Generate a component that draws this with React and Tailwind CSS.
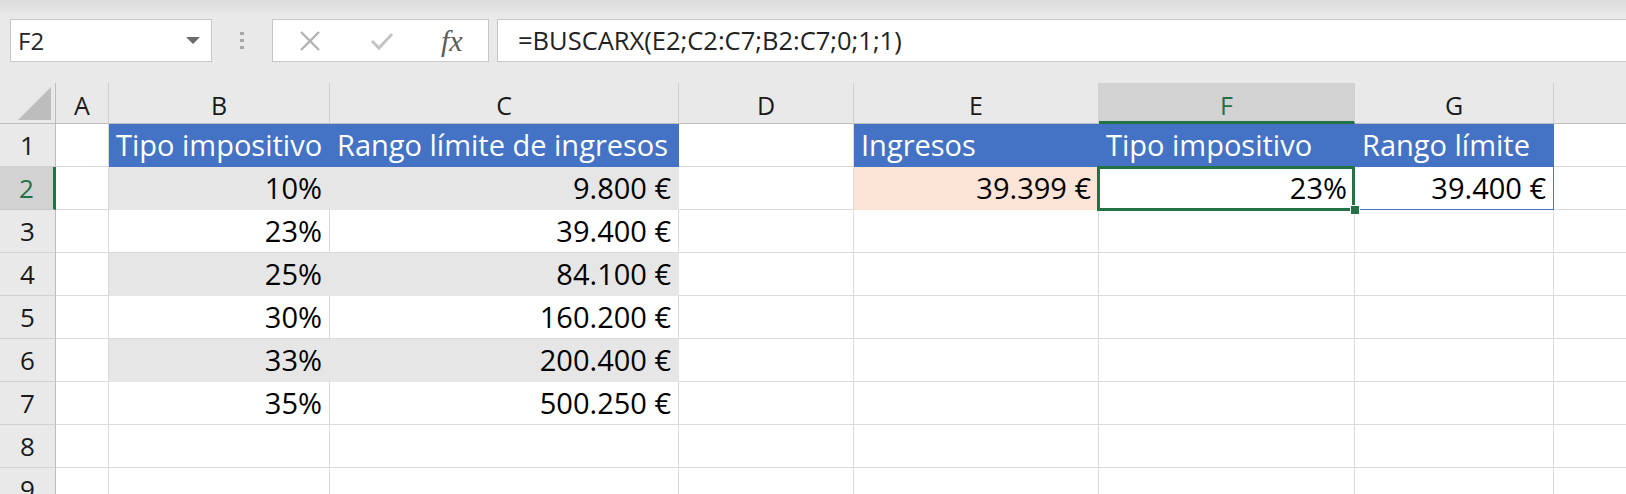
import React from 'react';

const cols = ['A', 'B', 'C', 'D', 'E', 'F', 'G', ''];

const BLUE = 'bg-[#4472c4] border-[#4472c4] text-white';
const GREY = 'bg-[#e7e6e6] border-[#e7e6e6] text-black';

// one object per sheet row, keys are the column letters
const rows = [
    { b: 'Tipo impositivo', c: 'Rango límite de ingresos', e: 'Ingresos', f: 'Tipo impositivo', g: 'Rango límite', head: true },
    { b: '10%', c: '9.800 €', e: '39.399 €', f: '23%', g: '39.400 €', grey: true },
    { b: '23%', c: '39.400 €' },
    { b: '25%', c: '84.100 €', grey: true },
    { b: '30%', c: '160.200 €' },
    { b: '33%', c: '200.400 €', grey: true },
    { b: '35%', c: '500.250 €' },
    {},
    {},
];

function Cell({ children, className = '', right }) {
    return (
        <div
            className={`relative h-[43px] border-r border-b text-[29px] leading-[42px] whitespace-nowrap px-[7px] ${right ? 'text-right' : 'text-left'} ${className || 'bg-white border-[#dadada] text-black'}`}
        >
            {children}
        </div>
    );
}

export default function App() {
    return (
        <div
            className="h-[494px] w-[1626px] overflow-hidden bg-white text-[#1f1f1f]"
            style={{ fontFamily: '"Open Sans", "Noto Sans", sans-serif' }}
        >
            {/* formula bar */}
            <div className="bg-[#e9e9e9]">
                <div className="h-[19px] bg-gradient-to-b from-[#dcdcdc] to-[#ebebeb]" />
                <div className="flex h-[43px] items-stretch">
                    <div className="ml-[10px] flex w-[202px] items-center justify-between border border-[#c6c6c6] bg-white pl-[7px] pr-[11px]">
                        <span className="text-[24px] text-[#262626]">F2</span>
                        <svg width="14" height="7" viewBox="0 0 14 7">
                            <path d="M0 0 L14 0 L7 7 Z" fill="#6b6b6b" />
                        </svg>
                    </div>
                    <div className="flex w-[60px] flex-col items-center justify-center gap-[4px]">
                        <span className="h-[3px] w-[4px] bg-[#a6a6a6]" />
                        <span className="h-[3px] w-[4px] bg-[#a6a6a6]" />
                        <span className="h-[3px] w-[4px] bg-[#a6a6a6]" />
                    </div>
                    <div className="flex w-[217px] items-center border border-[#c6c6c6] bg-white">
                        <svg className="ml-[26px]" width="22" height="22" viewBox="0 0 22 22">
                            <path d="M2 2 L20 20 M20 2 L2 20" stroke="#b3b3b3" strokeWidth="2.4" />
                        </svg>
                        <svg className="ml-[49px]" width="24" height="20" viewBox="0 0 24 20">
                            <path d="M2 10 L9 17 L22 3" stroke="#c4c4c4" strokeWidth="3" fill="none" />
                        </svg>
                        <span
                            className="ml-[47px] text-[30px] italic leading-none text-[#5c5c5c]"
                            style={{ fontFamily: '"Liberation Serif", "DejaVu Serif", serif' }}
                        >
                            fx
                        </span>
                    </div>
                    <div className="ml-[8px] flex flex-1 items-center border border-r-0 border-[#c6c6c6] bg-white pl-[20px]">
                        <span className="text-[25.5px] text-[#222]">=BUSCARX(E2;C2:C7;B2:C7;0;1;1)</span>
                    </div>
                </div>
                <div className="h-[21px]" />
            </div>

            {/* sheet */}
            <div className="grid grid-cols-[56px_53px_221px_349px_175px_245px_256px_199px_1fr]">
                {/* column headers */}
                <div className="relative h-[41px] border-r border-b border-[#bdbdbd] bg-[#e9e9e9]">
                    <svg className="absolute right-[4px] bottom-[3px]" width="33" height="33" viewBox="0 0 33 33">
                        <path d="M33 0 L33 33 L0 33 Z" fill="#bdbdbd" />
                    </svg>
                </div>
                {cols.map((c) => (
                    <div
                        key={c || 'h'}
                        className={`h-[41px] border-r pt-[2px] text-center text-[25px] leading-[41px] ${c === 'F' ? 'border-b-[3px] border-b-[#217346] border-r-[#cfcfcf] bg-[#d2d2d2] text-[#217346]' : 'border-b border-b-[#bdbdbd] border-r-[#cfcfcf] bg-[#e9e9e9] text-[#1a1a1a]'} ${c === '' ? 'border-r-0' : ''}`}
                    >
                        {c}
                    </div>
                ))}

                {rows.map((r, i) => {
                    const n = i + 1;
                    const fill = r.head ? BLUE : r.grey ? GREY : '';
                    return (
                        <React.Fragment key={n}>
                            <div
                                className={`h-[43px] border-b text-center text-[26px] leading-[42px] ${n === 2 ? 'border-r-[3px] border-r-[#217346] border-b-[#c6c6c6] bg-[#d2d2d2] text-[#217346]' : 'border-r border-r-[#bdbdbd] border-b-[#d0d0d0] bg-[#e9e9e9] text-[#1a1a1a]'}`}
                            >
                                {n}
                            </div>
                            <Cell />
                            <Cell className={fill} right={!r.head}>
                                {r.b}
                            </Cell>
                            <Cell className={fill} right={!r.head}>
                                {r.c}
                            </Cell>
                            <Cell />
                            <Cell
                                className={r.head ? BLUE : n === 2 ? 'bg-[#fce4d6] border-[#fce4d6] text-black' : ''}
                                right={!r.head}
                            >
                                {r.e}
                            </Cell>
                            <Cell className={r.head ? BLUE : ''} right={!r.head}>
                                {r.f}
                                {n === 2 && (
                                    <>
                                        <div className="pointer-events-none absolute -left-[2px] -top-[1px] -right-[1px] -bottom-[2px] z-10 border-[3px] border-[#217346]" />
                                        <div className="absolute -right-[5px] -bottom-[5px] z-20 h-[8px] w-[8px] bg-[#217346] outline outline-1 outline-white" />
                                    </>
                                )}
                            </Cell>
                            <Cell
                                className={r.head ? BLUE : n === 2 ? 'bg-white border-[#4a72c2] text-black' : ''}
                                right={!r.head}
                            >
                                {r.g}
                            </Cell>
                            <div className="h-[43px] border-b border-[#dadada] bg-white" />
                        </React.Fragment>
                    );
                })}
            </div>
        </div>
    );
}
